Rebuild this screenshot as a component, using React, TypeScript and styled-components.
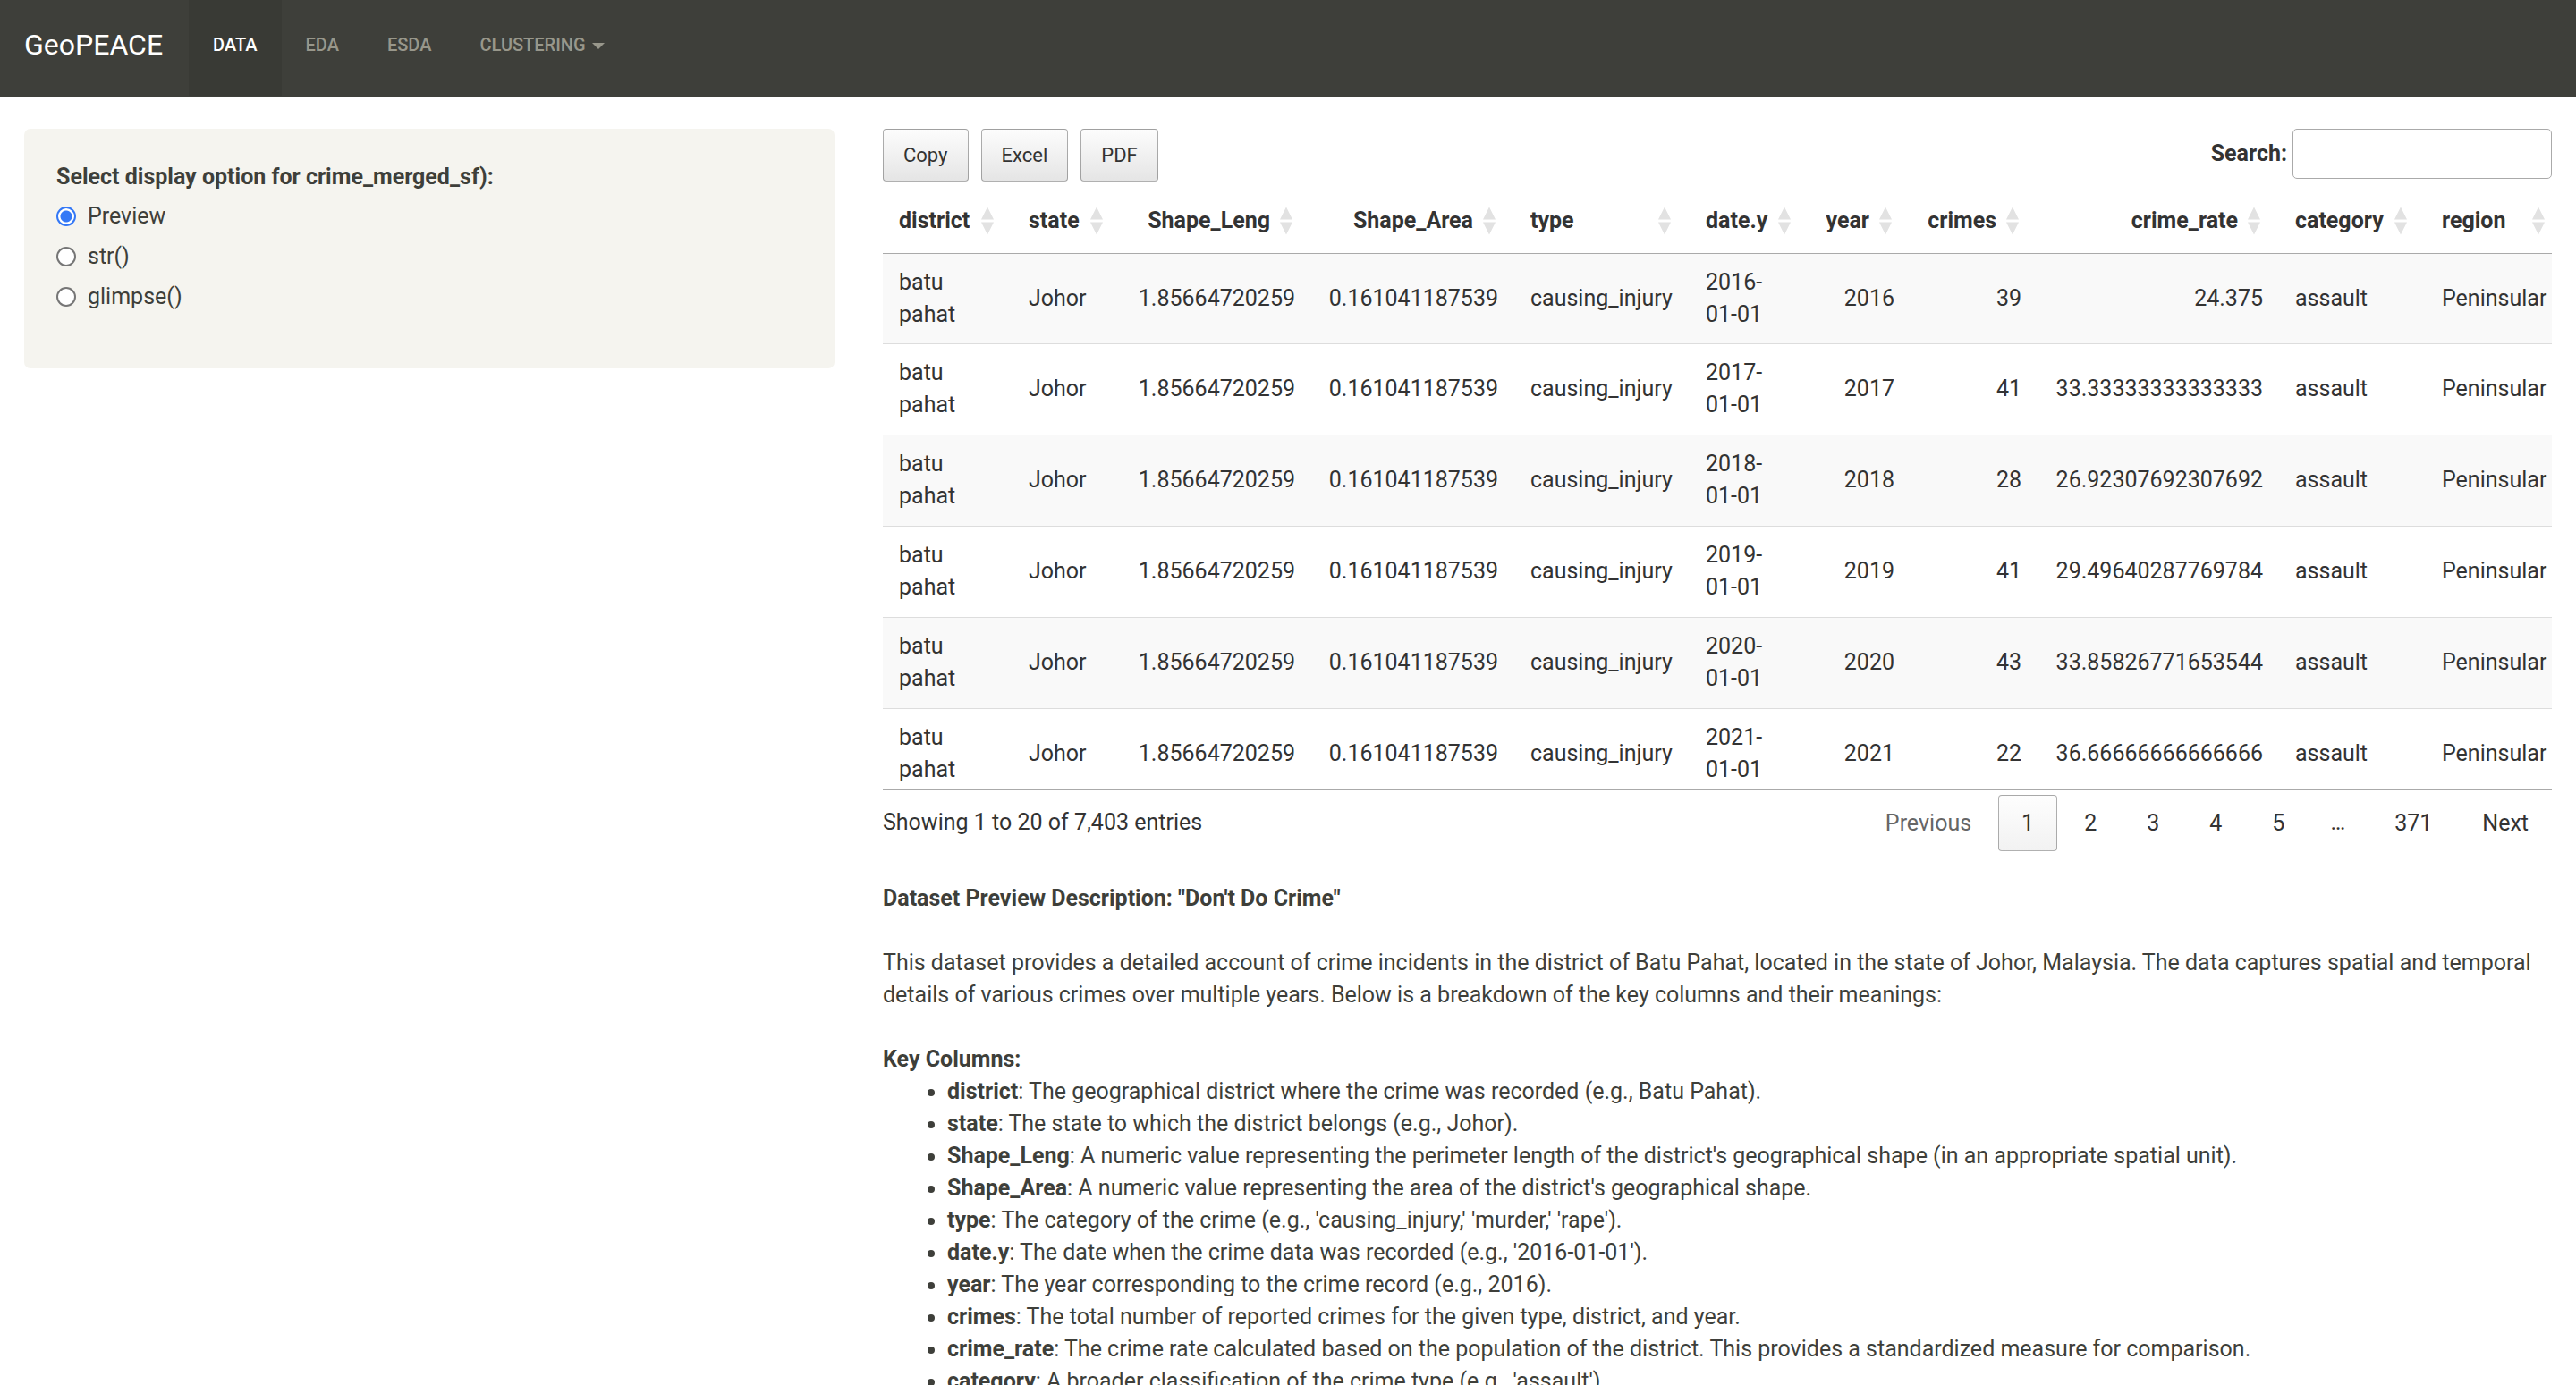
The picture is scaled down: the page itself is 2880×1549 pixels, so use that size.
import React, { useState } from 'react';
import styled, { createGlobalStyle } from 'styled-components';

const GlobalStyle = createGlobalStyle`
  *, *::before, *::after { box-sizing: border-box; }
  body {
    margin: 0;
    background: #fff;
    color: #3e3f3a;
    font-family: Roboto, "Liberation Sans", sans-serif;
    font-size: 25px;
    line-height: 36px;
  }
`;

const Navbar = styled.nav`
  display: flex;
  height: 108px;
  border-bottom: 1px solid #3e3f3a;
  background: #3e3f3a;
`;

const Brand = styled.a`
  padding: 32px 29px 32px 27px;
  color: #fff;
  font-size: 32px;
  text-decoration: none;
`;

const NavLink = styled.a<{ $active?: boolean }>`
  display: flex;
  align-items: flex-start;
  padding: 32px 27px;
  color: ${(p) => (p.$active ? '#fff' : '#98978b')};
  background: ${(p) => (p.$active ? '#393a35' : 'transparent')};
  font-size: 20px;
  font-weight: 500;
  text-transform: uppercase;
  text-decoration: none;
`;

const Caret = styled.span`
  margin: 16px 0 0 7px;
  border: 7px solid transparent;
  border-top-color: currentColor;
  border-bottom: 0;
`;

const Page = styled.div`
  display: grid;
  grid-template-columns: 1fr 2fr;
  align-items: start;
  padding-top: 36px;
`;

const Column = styled.div`
  min-width: 0;
  padding: 0 27px;
`;

const Well = styled.form`
  padding: 36px 36px 62px;
  border-radius: 7px;
  background: #f5f4ef;
`;

const Options = styled.fieldset`
  display: flex;
  flex-direction: column;
  gap: 9px;
  margin: 0;
  padding: 0;
  border: 0;
`;

const Legend = styled.legend`
  margin-bottom: 8px;
  padding: 0;
  font-weight: 700;
`;

const RadioLabel = styled.label`
  display: flex;
  align-items: center;
  gap: 13px;
`;

const Radio = styled.input`
  appearance: none;
  width: 22px;
  height: 22px;
  margin: 0;
  border: 2px solid #767676;
  border-radius: 50%;
  background: #fff;

  &:checked {
    border-color: #3478f6;
    background: radial-gradient(circle, #3478f6 6px, #fff 7px);
  }
`;

const Toolbar = styled.div`
  display: flex;
  justify-content: space-between;
  height: 67px;
  color: #333;
`;

const ButtonGroup = styled.div`
  display: flex;
  align-items: flex-start;
  gap: 14px;
`;

const ToolButton = styled.button`
  height: 59px;
  padding: 0 22px;
  border: 1px solid rgba(0, 0, 0, 0.3);
  border-radius: 4px;
  background: linear-gradient(to bottom, rgba(230, 230, 230, 0.1), rgba(0, 0, 0, 0.1));
  color: #333;
  font: inherit;
  font-size: 22px;
`;

const SearchLabel = styled.label`
  display: flex;
  align-items: center;
  gap: 6px;
  height: 56px;
  font-weight: 700;
`;

const SearchInput = styled.input`
  width: 290px;
  height: 56px;
  padding: 9px;
  border: 1px solid #aaa;
  border-radius: 5px;
  background: transparent;
  font: inherit;
  font-weight: 400;
`;

const TableScroll = styled.div`
  height: 672px;
  overflow: hidden;
  border-bottom: 1px solid #aaa;
`;

const Table = styled.table`
  width: 100%;
  min-width: 1879px;
  table-layout: fixed;
  border-collapse: separate;
  border-spacing: 0;
  color: #333;
`;

const Col = styled.col<{ $width: number }>`
  width: ${(p) => p.$width}px;
`;

const HeadCell = styled.th`
  padding: 18px 20px 18px 18px;
  border-bottom: 1px solid #aaa;
  font-weight: 700;
`;

const HeadContent = styled.div<{ $numeric?: boolean }>`
  display: flex;
  align-items: center;
  gap: 10px;

  span {
    flex: 1;
    text-align: ${(p) => (p.$numeric ? 'right' : 'left')};
  }
`;

const Cell = styled.td<{ $numeric?: boolean }>`
  padding: 14px 18px 15px;
  text-align: ${(p) => (p.$numeric ? 'right' : 'left')};
  vertical-align: middle;
`;

const BodyRow = styled.tr`
  &:nth-child(odd) { background: #f9f9f9; }
  &:not(:first-child) td { border-top: 1px solid #ddd; }
  &:first-child td { padding-bottom: 14px; }
`;

const TableFooter = styled.div`
  display: flex;
  justify-content: space-between;
  align-items: flex-start;
  height: 104px;
  color: #333;
`;

const Info = styled.div`
  padding-top: 19px;
`;

const Pagination = styled.div`
  display: flex;
  padding-top: 6px;
`;

const PageButton = styled.button<{ $current?: boolean }>`
  height: 63px;
  margin-left: 4px;
  padding: 0 25px;
  border: 1px solid ${(p) => (p.$current ? 'rgba(0, 0, 0, 0.3)' : 'transparent')};
  border-radius: 4px;
  background: ${(p) =>
    p.$current ? 'linear-gradient(to bottom, rgba(230, 230, 230, 0.05), rgba(0, 0, 0, 0.05))' : 'transparent'};
  color: #333;
  font: inherit;

  &:disabled { color: #666; }
`;

const Ellipsis = styled.span`
  padding: 13px 25px;
`;

const Description = styled.section`
  display: flex;
  flex-direction: column;
  gap: 36px;

  h4, p, ul { margin: 0; font-size: inherit; line-height: inherit; }
`;

const KeyList = styled.ul`
  padding-left: 72px;
`;

type ColumnDef = { name: string; width: number; numeric?: boolean };

const columns: ColumnDef[] = [
  { name: 'district', width: 145 },
  { name: 'state', width: 122 },
  { name: 'Shape_Leng', width: 212, numeric: true },
  { name: 'Shape_Area', width: 227, numeric: true },
  { name: 'type', width: 196 },
  { name: 'date.y', width: 134 },
  { name: 'year', width: 113, numeric: true },
  { name: 'crimes', width: 142, numeric: true },
  { name: 'crime_rate', width: 270, numeric: true },
  { name: 'category', width: 164 },
  { name: 'region', width: 154 },
];

const yearly: [number, number, string][] = [
  [2016, 39, '24.375'],
  [2017, 41, '33.33333333333333'],
  [2018, 28, '26.92307692307692'],
  [2019, 41, '29.49640287769784'],
  [2020, 43, '33.85826771653544'],
  [2021, 22, '36.66666666666666'],
];

const rows = yearly.map(([year, crimes, rate]) => [
  'batu pahat', 'Johor', '1.85664720259', '0.161041187539', 'causing_injury',
  `${year}-01-01`, year, crimes, rate, 'assault', 'Peninsular',
]);

const keyColumns: [string, string][] = [
  ['district', 'The geographical district where the crime was recorded (e.g., Batu Pahat).'],
  ['state', 'The state to which the district belongs (e.g., Johor).'],
  ['Shape_Leng', "A numeric value representing the perimeter length of the district's geographical shape (in an appropriate spatial unit)."],
  ['Shape_Area', "A numeric value representing the area of the district's geographical shape."],
  ['type', "The category of the crime (e.g., 'causing_injury,' 'murder,' 'rape')."],
  ['date.y', "The date when the crime data was recorded (e.g., '2016-01-01')."],
  ['year', 'The year corresponding to the crime record (e.g., 2016).'],
  ['crimes', 'The total number of reported crimes for the given type, district, and year.'],
  ['crime_rate', 'The crime rate calculated based on the population of the district. This provides a standardized measure for comparison.'],
  ['category', "A broader classification of the crime type (e.g., 'assault')."],
];

const SortIcon = () => (
  <svg width="16" height="32" viewBox="0 0 16 32" fill="#e2e2e2" aria-hidden="true">
    <path d="M8 0.5 L15 14.5 H1 Z" />
    <path d="M1 17.5 H15 L8 31.5 Z" />
  </svg>
);

export default function App() {
  const [display, setDisplay] = useState('Preview');
  const [query, setQuery] = useState('');

  return (
    <>
      <GlobalStyle />
      <Navbar>
        <Brand href="#">GeoPEACE</Brand>
        <NavLink href="#data" $active>Data</NavLink>
        <NavLink href="#eda">EDA</NavLink>
        <NavLink href="#esda">ESDA</NavLink>
        <NavLink href="#clustering">Clustering<Caret /></NavLink>
      </Navbar>
      <Page>
        <Column>
          <Well>
            <Options>
              <Legend>Select display option for crime_merged_sf):</Legend>
              {['Preview', 'str()', 'glimpse()'].map((name) => (
                <RadioLabel key={name}>
                  <Radio type="radio" name="display" checked={display === name} onChange={() => setDisplay(name)} />
                  {name}
                </RadioLabel>
              ))}
            </Options>
          </Well>
        </Column>
        <Column as="main">
          <Toolbar>
            <ButtonGroup>
              <ToolButton type="button">Copy</ToolButton>
              <ToolButton type="button">Excel</ToolButton>
              <ToolButton type="button">PDF</ToolButton>
            </ButtonGroup>
            <SearchLabel>
              Search:
              <SearchInput type="search" value={query} onChange={(e) => setQuery(e.target.value)} />
            </SearchLabel>
          </Toolbar>
          <TableScroll>
            <Table>
              <colgroup>
                {columns.map((c) => <Col key={c.name} $width={c.width} />)}
              </colgroup>
              <thead>
                <tr>
                  {columns.map((c) => (
                    <HeadCell key={c.name} scope="col">
                      <HeadContent $numeric={c.numeric}><span>{c.name}</span><SortIcon /></HeadContent>
                    </HeadCell>
                  ))}
                </tr>
              </thead>
              <tbody>
                {rows.map((row, r) => (
                  <BodyRow key={r}>
                    {row.map((value, i) => <Cell key={i} $numeric={columns[i].numeric}>{value}</Cell>)}
                  </BodyRow>
                ))}
              </tbody>
            </Table>
          </TableScroll>
          <TableFooter>
            <Info>Showing 1 to 20 of 7,403 entries</Info>
            <Pagination>
              <PageButton type="button" disabled>Previous</PageButton>
              <PageButton type="button" $current>1</PageButton>
              <PageButton type="button">2</PageButton>
              <PageButton type="button">3</PageButton>
              <PageButton type="button">4</PageButton>
              <PageButton type="button">5</PageButton>
              <Ellipsis>…</Ellipsis>
              <PageButton type="button">371</PageButton>
              <PageButton type="button">Next</PageButton>
            </Pagination>
          </TableFooter>
          <Description>
            <h4>Dataset Preview Description: "Don't Do Crime"</h4>
            <p>
              This dataset provides a detailed account of crime incidents in the district of Batu Pahat, located in the
              state of Johor, Malaysia. The data captures spatial and temporal details of various crimes over multiple
              years. Below is a breakdown of the key columns and their meanings:
            </p>
            <div>
              <h4>Key Columns:</h4>
              <KeyList>
                {keyColumns.map(([name, text]) => (
                  <li key={name}><strong>{name}</strong>: {text}</li>
                ))}
              </KeyList>
            </div>
          </Description>
        </Column>
      </Page>
    </>
  );
}
